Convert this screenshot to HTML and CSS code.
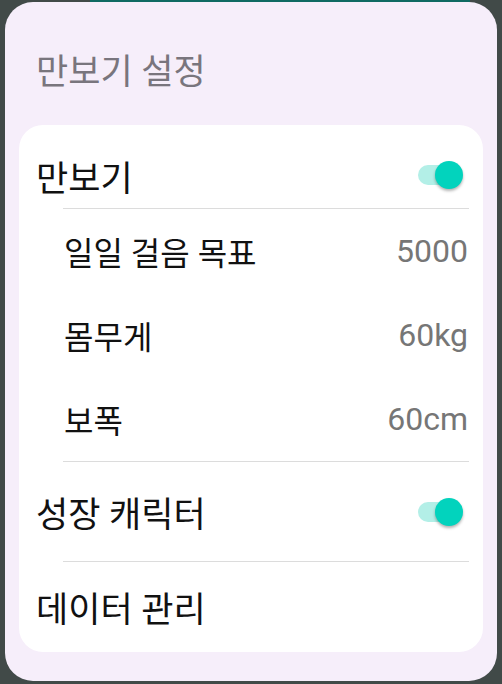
FILE: index.html
```html
<!DOCTYPE html>
<html lang="ko">
<head>
    <meta charset="UTF-8">
    <meta name="viewport" content="width=device-width, initial-scale=1.0">
    <title>만보기 설정</title>
    <link rel="stylesheet" href="styles.css">
</head>
<body>
    <div class="backdrop-top"></div>
    <div class="dialog">
        <h1 class="title">만보기 설정</h1>
        <div class="card">
            <div class="row row-first">
                <span class="label">만보기</span>
                <span class="toggle"><span class="track"></span><span class="knob"></span></span>
            </div>
            <div class="divider"></div>
            <div class="row sub">
                <span class="label">일일 걸음 목표</span>
                <span class="value">5000</span>
            </div>
            <div class="row sub">
                <span class="label">몸무게</span>
                <span class="value">60kg</span>
            </div>
            <div class="row sub">
                <span class="label">보폭</span>
                <span class="value">60cm</span>
            </div>
            <div class="divider"></div>
            <div class="row row-grow">
                <span class="label">성장 캐릭터</span>
                <span class="toggle"><span class="track"></span><span class="knob"></span></span>
            </div>
            <div class="divider"></div>
            <div class="row row-last">
                <span class="label">데이터 관리</span>
            </div>
        </div>
    </div>
</body>
</html>
```

FILE: styles.css
```css
body {
    margin: 0;
    background-color: #414a48;
    font-family: Roboto, "Noto Sans CJK KR", sans-serif;
    height: 684px;
    overflow: hidden;
}
.backdrop-top {
    height: 2px;
    margin: 0 32px 0 90px;
    background-color: #0f6a62;
}
.dialog {
    margin: 0 5px;
    background-color: #f6eefa;
    border-radius: 28px;
    padding: 0 14px 29px 14px;
}
.title {
    margin: 0;
    padding: 50px 0 0 17px;
    line-height: 42px;
    font-size: 35px;
    font-weight: normal;
    color: #79757d;
}
.card {
    margin-top: 31px;
    background-color: #ffffff;
    border-radius: 24px;
    padding: 17px 15px 2px 17px;
}
.row {
    display: flex;
    align-items: center;
    justify-content: space-between;
    font-size: 35px;
    color: #111111;
}
.row-first {
    height: 66px;
}
.sub {
    height: 84px;
    padding-left: 28px;
    font-size: 32px;
}
.row-grow {
    height: 99px;
}
.row-last {
    height: 88px;
}
.value {
    color: #767676;
}
.divider {
    height: 1px;
    background-color: #dcdcdc;
    margin-left: 27px;
    margin-right: -1px;
}
.toggle {
    position: relative;
    width: 45px;
    height: 28px;
    margin-right: 5px;
}
.track {
    position: absolute;
    left: 0;
    top: 4px;
    width: 40px;
    height: 20px;
    border-radius: 10px;
    background-color: #b3efe7;
}
.knob {
    position: absolute;
    right: 0;
    top: 0;
    width: 28px;
    height: 28px;
    border-radius: 50%;
    background-color: #02d3bd;
    box-shadow: 0 2px 3px rgba(0, 0, 0, 0.3);
}
```
